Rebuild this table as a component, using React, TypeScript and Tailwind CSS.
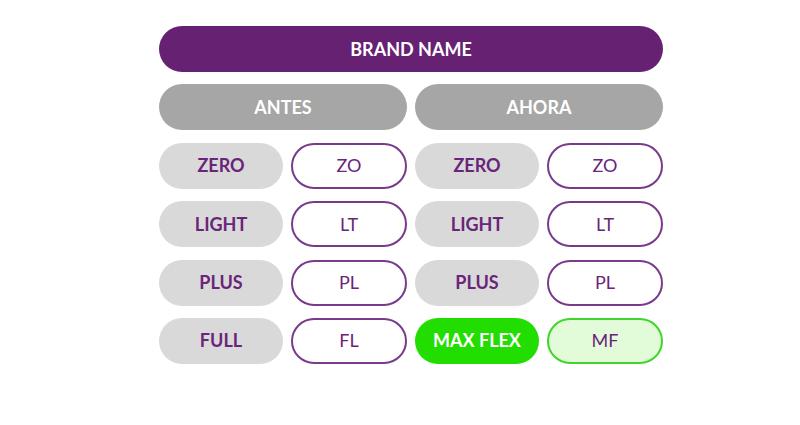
import React from 'react';

type Row = { plan: string; code: string; highlight?: boolean };

const antes: Row[] = [
  { plan: 'ZERO', code: 'ZO' },
  { plan: 'LIGHT', code: 'LT' },
  { plan: 'PLUS', code: 'PL' },
  { plan: 'FULL', code: 'FL' },
];

const ahora: Row[] = [
  { plan: 'ZERO', code: 'ZO' },
  { plan: 'LIGHT', code: 'LT' },
  { plan: 'PLUS', code: 'PL' },
  { plan: 'MAX FLEX', code: 'MF', highlight: true },
];

const PlanPair: React.FC<{ row: Row }> = ({ row }) => (
  <div className="flex gap-2">
    <div
      className={`w-[124px] h-[46px] rounded-full flex items-center justify-center font-bold text-[18px] ${
        row.highlight ? 'bg-[#22dd00] text-white' : 'bg-[#d9d9d9] text-[#6a2479]'
      }`}
    >
      {row.plan}
    </div>
    <div
      className={`w-[116px] h-[46px] rounded-full flex items-center justify-center text-[18px] border-2 ${
        row.highlight
          ? 'bg-[#e2fcd9] border-[#3fd62a] text-[#6a2479]'
          : 'bg-white border-[#7a3a8c] text-[#6a2479]'
      }`}
    >
      {row.code}
    </div>
  </div>
);

export default function App() {
  return (
    <div className="w-[800px] h-[425px] bg-white font-['Lato',sans-serif]">
      <div className="w-[504px] ml-[159px] pt-[26px] flex flex-col gap-[12.4px]">
        <div className="h-[46px] rounded-full bg-[#662173] text-white font-bold text-[18px] flex items-center justify-center">
          BRAND NAME
        </div>
        <div className="flex gap-2">
          <div className="w-[248px] h-[46px] rounded-full bg-[#a6a6a6] text-white font-bold text-[18px] flex items-center justify-center">
            ANTES
          </div>
          <div className="w-[248px] h-[46px] rounded-full bg-[#a6a6a6] text-white font-bold text-[18px] flex items-center justify-center">
            AHORA
          </div>
        </div>
        {antes.map((r, i) => (
          <div key={r.plan} className="flex gap-2">
            <PlanPair row={r} />
            <PlanPair row={ahora[i]} />
          </div>
        ))}
      </div>
    </div>
  );
}
